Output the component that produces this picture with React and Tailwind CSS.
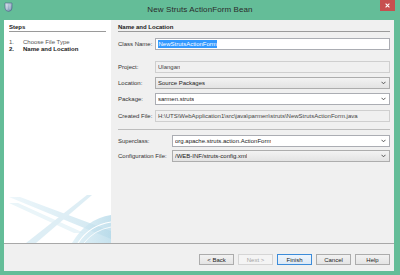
import React from "react";

// small chevron used by the combo boxes
function Chevron() {
  return (
    <svg width="5" height="4" viewBox="0 0 5 4" className="shrink-0">
      <path d="M0.5 0.8 L2.5 2.8 L4.5 0.8" fill="none" stroke="#444" strokeWidth="0.9" />
    </svg>
  );
}

function Field({ label, value, kind = "text", labelW = "w-[37px]", selected }) {
  const boxes = {
    text: "bg-white border-[#abadb3] text-[#222]",
    disabled: "bg-[#f0f0f0] border-[#cfcfcf] text-[#444]",
    combo: "bg-gradient-to-b from-[#f3f3f3] to-[#e3e3e3] border-[#adadad] text-[#222]",
    edit: "bg-white border-[#abadb3] text-[#222]",
  };
  return (
    <div className="flex items-center">
      <div className={`${labelW} shrink-0 text-[#333]`}>{label}</div>
      <div
        className={`flex-1 h-[12px] border flex items-center justify-between pl-[2px] pr-[3px] ${boxes[kind]}`}
      >
        {selected ? (
          <span className="bg-[#3399ff] text-white leading-[8px] px-[0.5px]">{value}</span>
        ) : (
          <span className="truncate">{value}</span>
        )}
        {(kind === "combo" || kind === "edit") && <Chevron />}
      </div>
    </div>
  );
}

function Btn({ children, variant }) {
  const look =
    variant === "disabled"
      ? "border-[#d5d5d5] text-[#a3a3a3] bg-[#f4f4f4]"
      : variant === "default"
      ? "border-[#3c8cd9] text-[#222] bg-gradient-to-b from-[#eef5fc] to-[#dde9f6]"
      : "border-[#acacac] text-[#222] bg-gradient-to-b from-[#f2f2f2] to-[#e4e4e4]";
  return (
    <div className={`w-[35px] h-[11px] border flex items-center justify-center ${look}`}>
      {children}
    </div>
  );
}

export default function App() {
  return (
    <div className="w-[400px] h-[275px] bg-[#64bd98] flex flex-col font-['Liberation_Sans',Arial,sans-serif] text-[6px] leading-[8px]">
      {/* title bar */}
      <div className="h-[20px] relative flex items-center justify-center">
        <svg width="9" height="10" viewBox="0 0 9 10" className="absolute left-[4px] top-[2px]">
          <defs>
            <linearGradient id="ic" x1="0" y1="0" x2="1" y2="1">
              <stop offset="0" stopColor="#dfe8f1" />
              <stop offset="1" stopColor="#5f7fa3" />
            </linearGradient>
          </defs>
          <path d="M1 1 H8 V6 Q8 9 4.5 9.5 Q1 9 1 6 Z" fill="url(#ic)" stroke="#4d6686" strokeWidth="0.6" />
          <path d="M3 2.5 V7.5 M6 2.5 V7.5" stroke="#fff" strokeWidth="0.6" opacity="0.7" />
        </svg>
        <span className="text-[8px] text-[#2b2b2b] tracking-[0.1px]">New Struts ActionForm Bean</span>
        <div className="absolute right-[5px] top-0 w-[15px] h-[11px] bg-[#c74f4f] flex items-center justify-center">
          <svg width="5" height="5" viewBox="0 0 5 5">
            <path d="M0.6 0.6 L4.4 4.4 M4.4 0.6 L0.6 4.4" stroke="#fff" strokeWidth="1.1" />
          </svg>
        </div>
      </div>

      {/* client area */}
      <div className="flex-1 ml-[4px] mr-[6px] mb-[4px] bg-[#f0f0f0] flex flex-col">
        <div className="h-[223px] flex">
          {/* steps panel */}
          <div className="w-[107px] bg-white flex flex-col">
            <div className="mx-[5px] mt-[3px] h-[9px] border-b border-[#9a9a9a] font-bold text-[#222]">Steps</div>
            <div className="mx-[5px] mt-[7px] flex flex-col leading-[7px]">
              <div className="flex text-[#555]">
                <span className="w-[14px]">1.</span>
                <span>Choose File Type</span>
              </div>
              <div className="flex font-bold text-[#222]">
                <span className="w-[14px]">2.</span>
                <span>Name and Location</span>
              </div>
            </div>
            <svg width="107" height="48" viewBox="0 0 107 48" className="mt-auto">
              <defs>
                <linearGradient id="wm" x1="0" y1="0" x2="1" y2="0">
                  <stop offset="0" stopColor="#eef7fb" />
                  <stop offset="1" stopColor="#cfe6f0" />
                </linearGradient>
                <linearGradient id="wm2" x1="0" y1="0" x2="1" y2="0">
                  <stop offset="0" stopColor="#d9edf5" />
                  <stop offset="1" stopColor="#b3d8e8" />
                </linearGradient>
              </defs>
              <polygon points="5,2 16,2 107,36 107,44" fill="url(#wm)" />
              <polygon points="5,8 14,8 80,38 70,38" fill="#eaf5f9" />
              <polygon points="22,48 32,48 88,0 83,0" fill="#deeef5" />
              <path d="M68 48 Q82 24 107 20 L107 48 Z" fill="url(#wm2)" opacity="0.75" />
              <path d="M74 48 Q86 30 107 27" fill="none" stroke="#ffffff" strokeWidth="1.2" />
              <path d="M80 48 Q90 35 107 32" fill="none" stroke="#ffffff" strokeWidth="0.8" />
            </svg>
          </div>

          {/* form panel */}
          <div className="flex-1 flex flex-col pl-[7px] pr-[4px]">
            <div className="mt-[3px] h-[9px] border-b border-[#9a9a9a] font-bold text-[#222]">Name and Location</div>
            <div className="mt-[6px]">
              <Field label="Class Name:" value="NewStrutsActionForm" kind="text" selected />
            </div>
            <div className="mt-[11px]">
              <Field label="Project:" value="Ulangan" kind="disabled" />
            </div>
            <div className="mt-[4px]">
              <Field label="Location:" value="Source Packages" kind="combo" />
            </div>
            <div className="mt-[4px]">
              <Field label="Package:" value="sarmen.struts" kind="edit" />
            </div>
            <div className="mt-[5px]">
              <Field
                label="Created File:"
                value="H:\UTS\WebApplication1\src\java\parmen\struts\NewStrutsActionForm.java"
                kind="disabled"
              />
            </div>
            <div className="mt-[7px] h-[1px] bg-[#bdbdbd]" />
            <div className="mt-[5px]">
              <Field label="Superclass:" value="org.apache.struts.action.ActionForm" kind="edit" labelW="w-[54px]" />
            </div>
            <div className="mt-[3px]">
              <Field label="Configuration File:" value="/WEB-INF/struts-config.xml" kind="combo" labelW="w-[54px]" />
            </div>
          </div>
        </div>

        {/* button strip */}
        <div className="flex-1 border-t border-[#a8a8a8] flex items-start justify-end gap-[4px] pt-[10px] pr-[4px]">
          <Btn>&lt; Back</Btn>
          <Btn variant="disabled">Next &gt;</Btn>
          <Btn variant="default">Finish</Btn>
          <Btn>Cancel</Btn>
          <Btn>Help</Btn>
        </div>
      </div>
    </div>
  );
}
